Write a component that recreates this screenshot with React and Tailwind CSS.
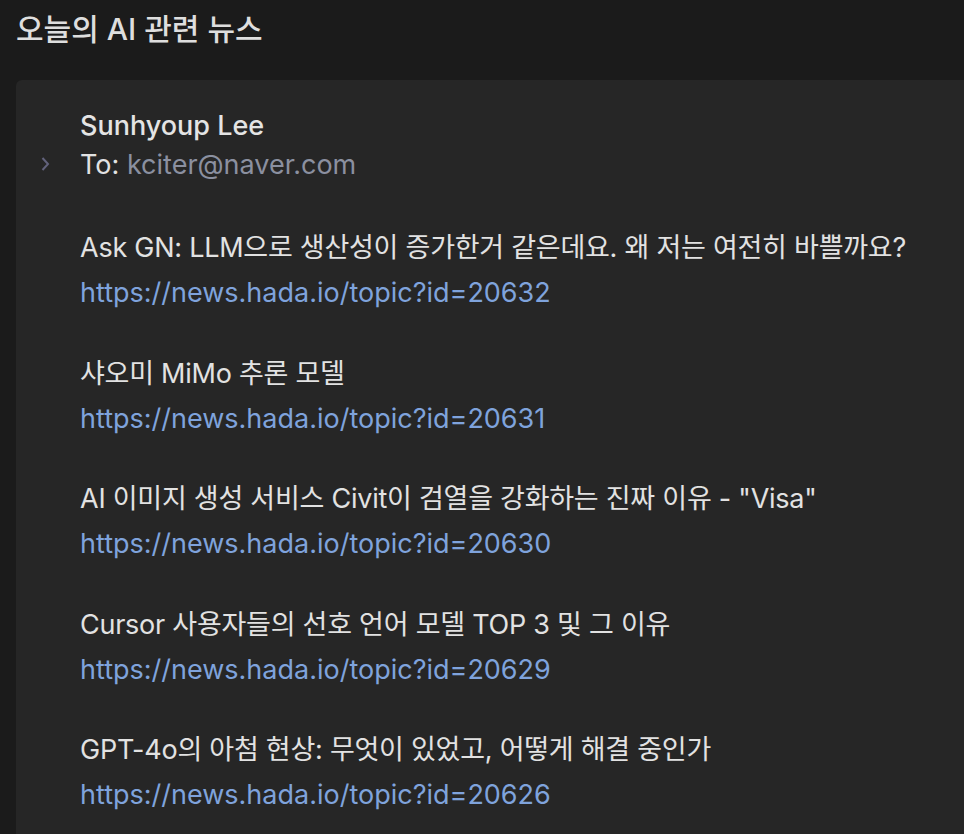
const items = [
  { title: 'Ask GN: LLM으로 생산성이 증가한거 같은데요. 왜 저는 여전히 바쁠까요?', id: 20632 },
  { title: '샤오미 MiMo 추론 모델', id: 20631 },
  { title: 'AI 이미지 생성 서비스 Civit이 검열을 강화하는 진짜 이유 - "Visa"', id: 20630 },
  { title: 'Cursor 사용자들의 선호 언어 모델 TOP 3 및 그 이유', id: 20629 },
  { title: 'GPT-4o의 아첨 현상: 무엇이 있었고, 어떻게 해결 중인가', id: 20626 },
]

export default function App() {
  return (
    <div className="h-[834px] w-[964px] overflow-hidden bg-[#1b1b1b] font-['Inter','Noto_Sans_CJK_KR',sans-serif] text-[#e2e2e2]">
      <h1 className="pl-4 pt-[10px] text-[30px] font-medium leading-[38px] text-[#dedede]">오늘의 AI 관련 뉴스</h1>
      <div className="mt-[32px] ml-4 h-[800px] rounded-tl-md bg-[#262626]">
        <div className="flex pt-[26px]">
          <div className="flex w-16 shrink-0 justify-center pt-[50px]">
            <svg width="10" height="16" viewBox="0 0 10 16" className="-ml-[6px]">
              <path d="M2.5 2 L8 8 L2.5 14" fill="none" stroke="#62627c" strokeWidth="2" />
            </svg>
          </div>
          <div className="text-[27px] leading-[39px]">
            <div className="font-medium text-[#e4e4e4]">Sunhyoup Lee</div>
            <div>
              To: <span className="text-[#8b90a0]">kciter@naver.com</span>
            </div>
            <div className="mt-[41px] flex flex-col gap-[35.6px] leading-[45px]">
              {items.map(item => (
                <div key={item.id}>
                  <div className="tracking-[-0.25px]">{item.title}</div>
                  <div className="text-[#7fa3dc]">https://news.hada.io/topic?id={item.id}</div>
                </div>
              ))}
            </div>
          </div>
        </div>
      </div>
    </div>
  )
}
